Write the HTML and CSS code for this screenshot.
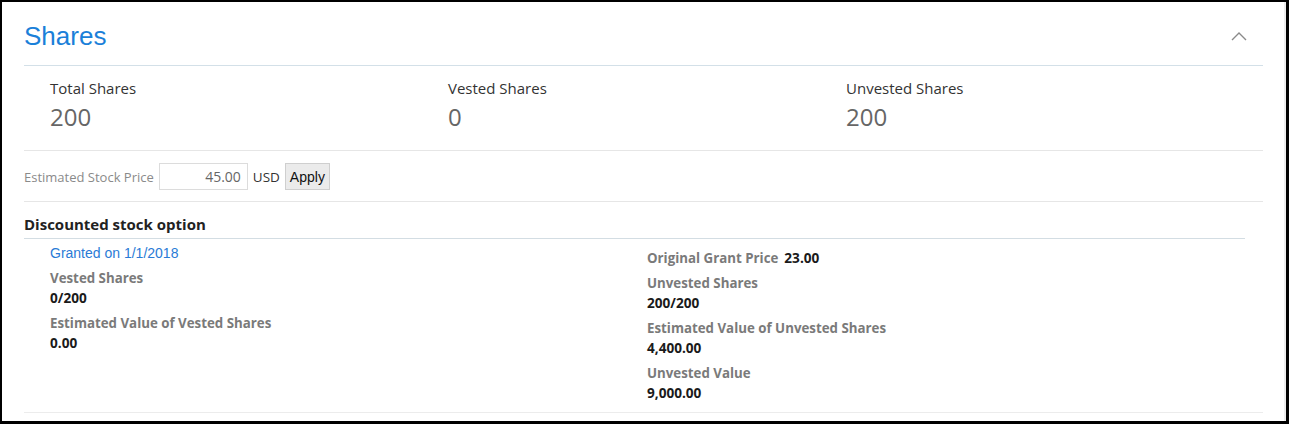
FILE: index.html
```html
<!DOCTYPE html>
<html>
<head>
<meta charset="utf-8">
<link rel="stylesheet" href="styles.css">
</head>
<body>
<div class="frame">
  <div class="panel">
    <div class="header">
      <h1 class="title">Shares</h1>
      <svg class="chevron" width="16" height="10" viewBox="0 0 16 10"><path d="M1 9 L8 2 L15 9" fill="none" stroke="#8a8a8a" stroke-width="1.4"/></svg>
    </div>
    <div class="summary">
      <div class="stat"><div class="stat-label">Total Shares</div><div class="stat-value">200</div></div>
      <div class="stat"><div class="stat-label">Vested Shares</div><div class="stat-value">0</div></div>
      <div class="stat"><div class="stat-label">Unvested Shares</div><div class="stat-value">200</div></div>
    </div>
    <div class="price-row">
      <span class="price-label">Estimated Stock Price</span>
      <span class="price-input">45.00</span>
      <span class="currency">USD</span>
      <button class="apply">Apply</button>
    </div>
    <div class="section-head">Discounted stock option</div>
    <div class="details">
      <div class="col col-left">
        <div class="grant-link">Granted on 1/1/2018</div>
        <div class="item"><div class="lbl">Vested Shares</div><div class="val">0/200</div></div>
        <div class="item"><div class="lbl">Estimated Value of Vested Shares</div><div class="val">0.00</div></div>
      </div>
      <div class="col col-right">
        <div class="inline-item"><span class="lbl">Original Grant Price</span><span class="val inline-val">23.00</span></div>
        <div class="item"><div class="lbl">Unvested Shares</div><div class="val">200/200</div></div>
        <div class="item"><div class="lbl">Estimated Value of Unvested Shares</div><div class="val">4,400.00</div></div>
        <div class="item"><div class="lbl">Unvested Value</div><div class="val">9,000.00</div></div>
      </div>
    </div>
  </div>
</div>
</body>
</html>
```
FILE: styles.css
```css
html, body {
  margin: 0;
  padding: 0;
  background: #000;
}
body {
  width: 1289px;
  height: 424px;
  overflow: hidden;
  font-family: "Open Sans", "Noto Sans", sans-serif;
}
.frame {
  margin: 2px 3px 3px 2px;
  width: 1284px;
  height: 419px;
  background: #fff;
  box-sizing: border-box;
  border-right: 2px solid #ececec;
}
.panel {
  padding: 0 21px 0 22px;
}
.header {
  display: flex;
  justify-content: space-between;
  align-items: center;
  padding: 19px 0 14px 0;
  border-bottom: 1px solid #d3e0e8;
}
.title {
  margin: 0;
  font-family: "Liberation Sans", Arial, sans-serif;
  font-weight: normal;
  font-size: 26px;
  line-height: 30px;
  color: #1a80d9;
}
.chevron {
  margin-right: 16px;
  display: block;
}
.summary {
  display: grid;
  grid-template-columns: repeat(3, 398px);
  padding: 12px 0 18px 26px;
  border-bottom: 1px solid #e6e6e6;
}
.stat-label {
  font-size: 15px;
  line-height: 20px;
  color: #333;
}
.stat-value {
  margin-top: 4px;
  font-size: 24px;
  line-height: 30px;
  color: #666;
}
.price-row {
  display: flex;
  align-items: center;
  padding: 12px 0 11px 0;
  border-bottom: 1px solid #e6e6e6;
}
.price-label {
  font-size: 13px;
  color: #8a8a8a;
}
.price-input {
  margin-left: 5px;
  width: 89px;
  height: 27px;
  box-sizing: border-box;
  border: 1px solid #dcdcdc;
  text-align: right;
  padding-right: 6px;
  font-size: 14px;
  line-height: 25px;
  color: #666;
}
.currency {
  margin-left: 5px;
  font-size: 13.5px;
  color: #333;
}
.apply {
  margin-left: 5px;
  width: 45px;
  height: 27px;
  padding: 0;
  border: 1px solid #cfcfcf;
  background: #ebebeb;
  font-family: "Liberation Sans", Arial, sans-serif;
  font-size: 14px;
  color: #111;
}
.section-head {
  padding: 12px 0 4px 0;
  margin-right: 18px;
  font-size: 15px;
  line-height: 20px;
  font-weight: bold;
  color: #222;
  border-bottom: 1px solid #d3dde3;
}
.details {
  display: grid;
  grid-template-columns: 597px 1fr;
  padding: 0 0 9px 26px;
  border-bottom: 1px solid #ececec;
}
.col-left {
  padding-top: 4px;
}
.col-right {
  padding-top: 9px;
}
.grant-link {
  font-family: "Liberation Sans", Arial, sans-serif;
  font-size: 14px;
  line-height: 20px;
  color: #2a7bd6;
}
.item {
  margin-top: 5px;
}
.lbl {
  font-size: 13.3px;
  line-height: 20px;
  font-weight: bold;
  color: #7a7a7a;
}
.val {
  font-size: 13.6px;
  line-height: 20px;
  font-weight: bold;
  color: #1a1a1a;
}
.inline-item {
  display: flex;
  align-items: baseline;
  height: 20px;
}
.inline-val {
  margin-left: 6px;
}
```
